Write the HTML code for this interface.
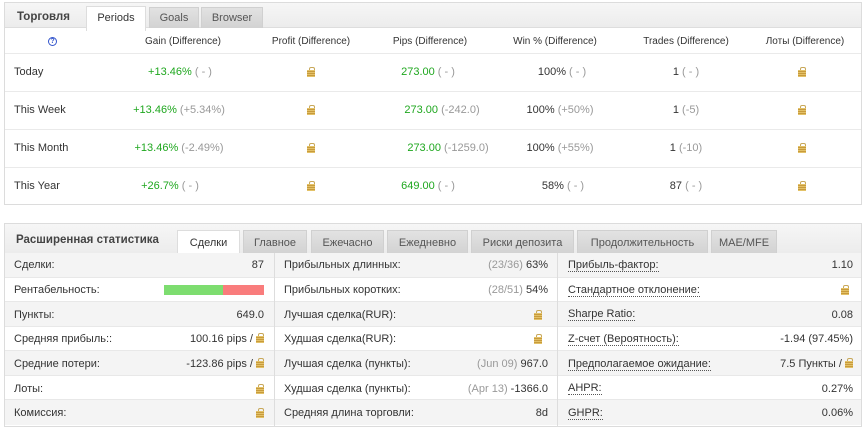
<!DOCTYPE html>
<html><head><meta charset="utf-8"><style>
*{box-sizing:border-box;margin:0;padding:0}
body{width:866px;height:428px;background:#fff;font-family:"Liberation Sans","DejaVu Sans",sans-serif;font-size:11px;color:#333;position:relative;overflow:hidden}
.panel{position:absolute;left:4px;width:858px;border:1px solid #dcdcdc;background:#fff}
.hdr{position:absolute;left:0;top:0;width:100%;background:linear-gradient(#f6f6f6,#ececec);border-bottom:1px solid #ddd}
.title{position:absolute;font-weight:bold;color:#444;font-size:11.5px}
.tab{position:absolute;background:linear-gradient(#e2e2e2,#d2d2d2);color:#555;text-align:center;border:1px solid #d0d0d0;border-bottom:none}
.tab.on{background:#fff;color:#333;border-color:#ddd;height:25px!important}
.a{position:absolute;white-space:nowrap}
.c{transform:translateX(-50%)}
.g{color:#1fa71f}
.gr{color:#999}
.lk{display:inline-block;width:8px;height:10px;position:relative;vertical-align:-1px}
.lk:before{content:"";position:absolute;left:2px;top:0;width:4px;height:4px;border:1px solid #c8a85a;border-bottom:none;border-radius:2px 2px 0 0}
.lk:after{content:"";position:absolute;left:0;top:3px;width:8px;height:7px;background:repeating-linear-gradient(#e3c268 0 1px,#c89a3c 1px 2px)}
.row{position:absolute;left:0;width:100%;border-top:1px solid #eaeaea}
.u{border-bottom:1px dotted #555}
.f{display:flex;justify-content:space-between;height:24.7px;align-items:center}
</style></head><body>

<div class="panel" style="top:2px;height:203px">
 <div class="hdr" style="height:25px"></div>
 <div class="title" style="left:12px;top:8px">Торговля</div>
 <div class="tab on" style="left:81px;top:3px;width:60px;height:23px;line-height:22px">Periods</div>
 <div class="tab" style="left:144px;top:4px;width:50px;height:21px;line-height:21px">Goals</div>
 <div class="tab" style="left:196px;top:4px;width:62px;height:21px;line-height:21px">Browser</div>
 <div class="row" style="top:50px;height:38px"></div>
 <div class="row" style="top:88px;height:38px"></div>
 <div class="row" style="top:126px;height:38px"></div>
 <div class="row" style="top:164px;height:38px"></div>
</div>
<div style="position:absolute;top:37px;left:48px;width:9px;height:9px;border:1px solid #3355cc;border-radius:50%;font-size:7px;line-height:7px;text-align:center;color:#3355cc;font-weight:bold">?</div>
<div class="a c" style="left:183px;top:36px;font-size:10px">Gain (Difference)</div>
<div class="a c" style="left:311px;top:36px;font-size:10px">Profit (Difference)</div>
<div class="a c" style="left:430px;top:36px;font-size:10px">Pips (Difference)</div>
<div class="a c" style="left:555px;top:36px;font-size:10px">Win % (Difference)</div>
<div class="a c" style="left:686px;top:36px;font-size:10px">Trades (Difference)</div>
<div class="a c" style="left:805px;top:36px;font-size:10px">Лоты (Difference)</div>

<div class="a" style="left:14px;top:66px">Today</div>
<div class="a c" style="left:180px;top:66px"><span class="g">+13.46%</span> <span class="gr">( - )</span></div>
<div class="a c" style="left:311px;top:67px"><span class="lk"></span></div>
<div class="a c" style="left:428px;top:66px"><span class="g">273.00</span> <span class="gr">( - )</span></div>
<div class="a c" style="left:562px;top:66px">100% <span class="gr">( - )</span></div>
<div class="a c" style="left:686px;top:66px">1 <span class="gr">( - )</span></div>
<div class="a c" style="left:802px;top:67px"><span class="lk"></span></div>

<div class="a" style="left:14px;top:104px">This Week</div>
<div class="a c" style="left:179px;top:104px"><span class="g">+13.46%</span> <span class="gr">(+5.34%)</span></div>
<div class="a c" style="left:311px;top:105px"><span class="lk"></span></div>
<div class="a c" style="left:442px;top:104px"><span class="g">273.00</span> <span class="gr">(-242.0)</span></div>
<div class="a c" style="left:560px;top:104px">100% <span class="gr">(+50%)</span></div>
<div class="a c" style="left:686px;top:104px">1 <span class="gr">(-5)</span></div>
<div class="a c" style="left:802px;top:105px"><span class="lk"></span></div>

<div class="a" style="left:14px;top:142px">This Month</div>
<div class="a c" style="left:179px;top:142px"><span class="g">+13.46%</span> <span class="gr">(-2.49%)</span></div>
<div class="a c" style="left:311px;top:143px"><span class="lk"></span></div>
<div class="a c" style="left:448px;top:142px"><span class="g">273.00</span> <span class="gr">(-1259.0)</span></div>
<div class="a c" style="left:560px;top:142px">100% <span class="gr">(+55%)</span></div>
<div class="a c" style="left:686px;top:142px">1 <span class="gr">(-10)</span></div>
<div class="a c" style="left:802px;top:143px"><span class="lk"></span></div>

<div class="a" style="left:14px;top:180px">This Year</div>
<div class="a c" style="left:170px;top:180px"><span class="g">+26.7%</span> <span class="gr">( - )</span></div>
<div class="a c" style="left:311px;top:181px"><span class="lk"></span></div>
<div class="a c" style="left:428px;top:180px"><span class="g">649.00</span> <span class="gr">( - )</span></div>
<div class="a c" style="left:563px;top:180px">58% <span class="gr">( - )</span></div>
<div class="a c" style="left:686px;top:180px">87 <span class="gr">( - )</span></div>
<div class="a c" style="left:802px;top:181px"><span class="lk"></span></div>

<div class="panel" style="top:223px;height:204px">
 <div class="hdr" style="height:30px"></div>
 <div class="title" style="left:11px;top:10px">Расширенная статистика</div>
 <div class="tab on" style="left:172px;top:6px;width:63px;line-height:24px">Сделки</div>
 <div class="tab" style="left:238px;top:6px;width:64px;height:24px;line-height:24px">Главное</div>
 <div class="tab" style="left:306px;top:6px;width:73px;height:24px;line-height:24px">Ежечасно</div>
 <div class="tab" style="left:382px;top:6px;width:81px;height:24px;line-height:24px">Ежедневно</div>
 <div class="tab" style="left:466px;top:6px;width:103px;height:24px;line-height:24px">Риски депозита</div>
 <div class="tab" style="left:572px;top:6px;width:131px;height:24px;line-height:24px">Продолжительность</div>
 <div class="tab" style="left:706px;top:6px;width:66px;height:24px;line-height:24px">MAE/MFE</div>
</div>
<div style="position:absolute;left:5px;top:253px;width:856px">
 <div style="height:25px;background:#f4f4f4;border-bottom:1px solid #e8e8e8"></div>
 <div style="height:24px;background:#fff;border-bottom:1px solid #e8e8e8"></div>
 <div style="height:25px;background:#f4f4f4;border-bottom:1px solid #e8e8e8"></div>
 <div style="height:24px;background:#fff;border-bottom:1px solid #e8e8e8"></div>
 <div style="height:25px;background:#f4f4f4;border-bottom:1px solid #e8e8e8"></div>
 <div style="height:24px;background:#fff;border-bottom:1px solid #e8e8e8"></div>
 <div style="height:25px;background:#f4f4f4"></div>
</div>
<div style="position:absolute;left:274px;top:253px;width:1px;height:174px;background:#ddd"></div>
<div style="position:absolute;left:557px;top:253px;width:1px;height:174px;background:#ddd"></div>

<div style="position:absolute;top:253px;left:14px;width:250px">
 <div class="f"><span>Сделки:</span><span>87</span></div>
 <div class="f"><span>Рентабельность:</span><span style="display:flex;height:10px;width:100px"><i style="width:59px;background:#7ddd70"></i><i style="width:41px;background:#f97c7c"></i></span></div>
 <div class="f"><span>Пункты:</span><span>649.0</span></div>
 <div class="f"><span>Средняя прибыль::</span><span>100.16 pips / <span class="lk"></span></span></div>
 <div class="f"><span>Средние потери:</span><span>-123.86 pips / <span class="lk"></span></span></div>
 <div class="f"><span>Лоты:</span><span class="lk"></span></div>
 <div class="f"><span>Комиссия:</span><span class="lk"></span></div>
</div>
<div style="position:absolute;top:253px;left:284px;width:264px">
 <div class="f"><span>Прибыльных длинных:</span><span><span class="gr">(23/36)</span> 63%</span></div>
 <div class="f"><span>Прибыльных коротких:</span><span><span class="gr">(28/51)</span> 54%</span></div>
 <div class="f"><span>Лучшая сделка(RUR):</span><span class="lk" style="margin-right:6px"></span></div>
 <div class="f"><span>Худшая сделка(RUR):</span><span class="lk" style="margin-right:6px"></span></div>
 <div class="f"><span>Лучшая сделка (пункты):</span><span><span class="gr">(Jun 09)</span> 967.0</span></div>
 <div class="f"><span>Худшая сделка (пункты):</span><span><span class="gr">(Apr 13)</span> -1366.0</span></div>
 <div class="f"><span>Средняя длина торговли:</span><span>8d</span></div>
</div>
<div style="position:absolute;top:253px;left:568px;width:285px">
 <div class="f"><span class="u">Прибыль-фактор:</span><span>1.10</span></div>
 <div class="f"><span class="u">Стандартное отклонение:</span><span class="lk" style="margin-right:4px"></span></div>
 <div class="f"><span class="u">Sharpe Ratio:</span><span>0.08</span></div>
 <div class="f"><span class="u">Z-счет (Вероятность):</span><span>-1.94 (97.45%)</span></div>
 <div class="f"><span class="u">Предполагаемое ожидание:</span><span>7.5 Пункты / <span class="lk"></span></span></div>
 <div class="f"><span class="u">AHPR:</span><span>0.27%</span></div>
 <div class="f"><span class="u">GHPR:</span><span>0.06%</span></div>
</div>
</body></html>
